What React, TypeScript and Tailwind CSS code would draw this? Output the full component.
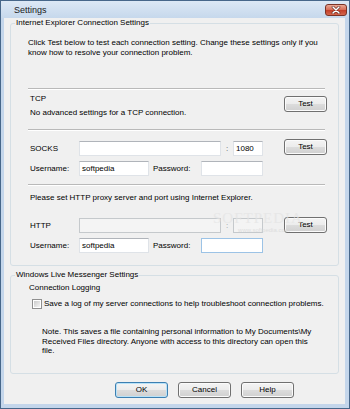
import React from "react";

const btn =
  "h-[16px] rounded-[3px] border bg-[linear-gradient(to_bottom,#f4f4f4_0%,#ececec_48%,#dcdcdc_52%,#d0d0d0_100%)] text-[8px] leading-none flex items-center justify-center text-black";

function Btn({ label, w, def }: { label: string; w: string; def?: boolean }) {
  return (
    <div
      className={
        btn +
        " " +
        w +
        (def
          ? " border-[#3c7fb1] shadow-[inset_0_0_0_1px_#b8e2f8]"
          : " border-[#707070] shadow-[inset_0_0_0_1px_#fbfbfb]")
      }
    >
      {label}
    </div>
  );
}

function Input({ w, value, disabled, focus }: { w: string; value?: string; disabled?: boolean; focus?: boolean }) {
  return (
    <div
      className={
        "h-[15px] border flex items-center pl-[2px] text-[8px] " +
        w +
        (disabled
          ? " bg-[#f4f4f4] border-[#c5c9cc]"
          : focus
          ? " bg-white border-[#9cc3e6]"
          : " bg-white border-[#dfe3e8] border-t-[#b0b4ba]")
      }
    >
      {value}
    </div>
  );
}

function Sep({ mt }: { mt: string }) {
  return <div className={"h-[2px] mr-[2px] border-t border-[#b9b9b9] border-b border-b-white " + mt} />;
}

export default function App() {
  return (
    <div className="w-[350px] h-[409px] overflow-hidden bg-[#c4d6eb] border border-[#47678a] flex flex-col relative font-['Liberation_Sans',Arial,sans-serif] text-[8px] text-black whitespace-nowrap">
      {/* title bar */}
      <div className="h-[17px] flex items-start justify-between pl-[13px] pr-[2px] bg-[linear-gradient(to_bottom,#dce8f5,#c6d8ec)]">
        <div className="pt-[4px] text-[9px] leading-[10px] text-[#1a1a1a]">Settings</div>
        <div className="mt-[3px] w-[22px] h-[12px] rounded-[3px] border border-[#7a3326] bg-[linear-gradient(to_bottom,#eaa895_0%,#d8705a_45%,#c4412b_55%,#d4664c_100%)] flex items-center justify-center">
          <svg width="10" height="8" viewBox="0 0 10 8">
            <path d="M2 1 L8 7 M8 1 L2 7" stroke="#5a2018" strokeWidth="2.6" strokeLinecap="round" />
            <path d="M2 1 L8 7 M8 1 L2 7" stroke="#ffffff" strokeWidth="1.5" strokeLinecap="round" />
          </svg>
        </div>
      </div>

      {/* client */}
      <div className="flex-1 ml-[3px] mr-[4px] mb-[4px] bg-[#f0f0f0] pl-[6px] pr-[6px] flex flex-col">
        {/* group 1 */}
        <fieldset className="h-[248px] border border-[#d5dfe5] rounded-[3px] p-0 m-0 min-w-0">
          <legend className="ml-[4px] px-[1px] leading-[10px]">Internet Explorer Connection Settings</legend>
          <div className="pl-[17px] pr-[11px] flex flex-col">
            <div className="mt-[10px] leading-[9.5px]">
              Click Test below to test each connection setting. Change these settings only if you
              <br />
              know how to resolve your connection problem.
            </div>
            <Sep mt="mt-[31px]" />
            {/* TCP */}
            <div className="flex justify-between items-start">
              <div className="pl-[2px] flex flex-col">
                <div className="mt-[4px] leading-[10px]">TCP</div>
                <div className="mt-[4px] leading-[10px]">No advanced settings for a TCP connection.</div>
              </div>
              <div className="mt-[6px]">
                <Btn label="Test" w="w-[43px]" />
              </div>
            </div>
            <Sep mt="mt-[11px]" />
            {/* SOCKS */}
            <div className="flex justify-between items-start">
              <div className="flex flex-col">
                <div className="mt-[10px] flex items-center">
                  <div className="w-[51px] pl-[2px]">SOCKS</div>
                  <Input w="w-[142px]" />
                  <div className="w-[12px] text-center text-[#555]">:</div>
                  <Input w="w-[30px]" value="1080" />
                </div>
                <div className="mt-[5px] flex items-center">
                  <div className="w-[51px] pl-[2px]">Username:</div>
                  <Input w="w-[70px]" value="softpedia" />
                  <div className="w-[52px] pl-[4px]">Password:</div>
                  <Input w="w-[62px]" />
                </div>
              </div>
              <div className="mt-[8px]">
                <Btn label="Test" w="w-[43px]" />
              </div>
            </div>
            <Sep mt="mt-[8px]" />
            <div className="mt-[7px] pl-[2px] leading-[10px]">
              Please set HTTP proxy server and port using Internet Explorer.
            </div>
            {/* HTTP */}
            <div className="flex justify-between items-start">
              <div className="flex flex-col">
                <div className="mt-[15px] flex items-center">
                  <div className="w-[51px] pl-[2px]">HTTP</div>
                  <Input w="w-[142px]" disabled />
                  <div className="w-[12px] text-center text-[#999]">:</div>
                  <Input w="w-[30px]" disabled />
                </div>
                <div className="mt-[5px] flex items-center">
                  <div className="w-[51px] pl-[2px]">Username:</div>
                  <Input w="w-[70px]" value="softpedia" />
                  <div className="w-[52px] pl-[4px]">Password:</div>
                  <Input w="w-[62px]" focus />
                </div>
              </div>
              <div className="mt-[14px]">
                <Btn label="Test" w="w-[43px]" />
              </div>
            </div>
          </div>
        </fieldset>

        {/* group 2 */}
        <fieldset className="mt-[4px] h-[104px] border border-[#d5dfe5] rounded-[3px] p-0 m-0 min-w-0">
          <legend className="ml-[4px] px-[1px] leading-[10px]">Windows Live Messenger Settings</legend>
          <div className="pl-[18px] flex flex-col">
            <div className="mt-[3px] leading-[10px]">Connection Logging</div>
            <div className="mt-[6px] flex items-center h-[10px]">
              <div className="ml-[3px] w-[10px] h-[10px] border border-[#8f8f8f] bg-white p-[1px]">
                <div className="w-full h-full bg-[linear-gradient(135deg,#cbcbcb,#f4f4f4)]" />
              </div>
              <div className="ml-[2px] leading-[10px]">
                Save a log of my server connections to help troubleshoot connection problems.
              </div>
            </div>
            <div className="mt-[18px] ml-[13px] leading-[9.5px]">
              Note. This saves a file containing personal information to My Documents\My
              <br />
              Received Files directory. Anyone with access to this directory can open this
              <br />
              file.
            </div>
          </div>
        </fieldset>

        {/* buttons */}
        <div className="mt-[8px] flex justify-end gap-[10px] mr-[45px]">
          <Btn label="OK" w="w-[53px]" def />
          <Btn label="Cancel" w="w-[53px]" />
          <Btn label="Help" w="w-[53px]" />
        </div>
      </div>

      {/* watermark */}
      <div className="absolute left-[212px] top-[210px] flex flex-col items-center pointer-events-none opacity-70">
        <div className="font-['Liberation_Serif',serif] text-[15px] leading-[15px] tracking-[1px] text-[#e4e4e4]">SOFTPEDIA</div>
        <div className="text-[6px] leading-[8px] text-[#d6d6d6] ml-[12px]">www.softpedia.com</div>
      </div>
    </div>
  );
}
